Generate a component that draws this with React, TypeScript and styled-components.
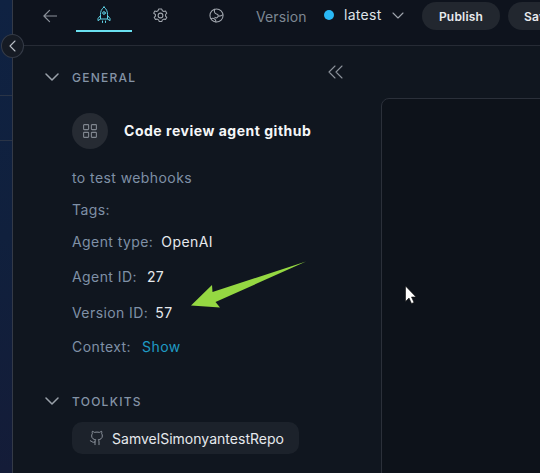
import React from "react";
import styled, { createGlobalStyle } from "styled-components";

const Global = createGlobalStyle`
  html, body { margin: 0; padding: 0; background: #0e131d; }
  * { box-sizing: border-box; }
`;

const Page = styled.div`
  position: relative;
  width: 540px;
  height: 473px;
  overflow: hidden;
  display: flex;
  font-family: Inter, "Liberation Sans", sans-serif;
  background: #10161f;
`;

const Rail = styled.div`
  width: 13px;
  flex: none;
  display: flex;
  flex-direction: column;
  border-right: 1px solid #343a47;
  background: linear-gradient(180deg, #0f2242 0%, #10203d 50%, #141c38 100%);
`;

const RailRow = styled.div<{ $h: number }>`
  height: ${(p) => p.$h}px;
  flex: none;
  border-bottom: 1px solid #2a3446;
`;

const Main = styled.div`
  flex: 1;
  min-width: 0;
  display: flex;
  flex-direction: column;
`;

const Header = styled.header`
  height: 46px;
  flex: none;
  display: flex;
  padding: 0 0 0 30px;
  background: #0e131d;
  border-bottom: 1px solid #262b35;
`;

const HeaderIcon = styled.div`
  width: 14px;
  height: 32px;
  margin-right: 19px;
  flex: none;
  display: flex;
  align-items: center;
  color: #8c929b;
`;

const Tab = styled.div<{ $active?: boolean }>`
  width: 56px;
  height: 32px;
  flex: none;
  display: flex;
  align-items: center;
  justify-content: center;
  padding-top: 0;
  color: ${(p) => (p.$active ? "#5fd5e8" : "#a0a5ad")};
  border-bottom: 2px solid ${(p) => (p.$active ? "#6ae0f0" : "transparent")};
`;

const VersionLabel = styled.span`
  margin-left: 12px;
  height: 32px;
  line-height: 33px;
  font-size: 14px;
  letter-spacing: 0.1px;
  color: #7d8793;
  width: 68px;
  flex: none;
`;

const VersionDot = styled.span`
  width: 10px;
  height: 10px;
  margin-top: 10px;
  border-radius: 50%;
  background: #29b8f5;
  flex: none;
`;

const VersionValue = styled.span`
  margin-left: 10px;
  width: 48px;
  flex: none;
  height: 30px;
  line-height: 30px;
  font-size: 14px;
  letter-spacing: 0.3px;
  color: #dfe3e8;
`;

const VersionCaret = styled.div`
  width: 12px;
  height: 30px;
  flex: none;
  display: flex;
  align-items: center;
  color: #a0a5ad;
`;

const PillButton = styled.button<{ $clipped?: boolean }>`
  height: 28px;
  margin-top: 2px;
  margin-left: ${(p) => (p.$clipped ? "8px" : "18px")};
  width: 78px;
  flex: none;
  padding: ${(p) => (p.$clipped ? "0 0 0 16px" : "0")};
  text-align: ${(p) => (p.$clipped ? "left" : "center")};
  border: 0;
  border-radius: 14px;
  background: #22272f;
  color: #e8eaed;
  font-family: inherit;
  font-size: 12px;
  font-weight: 600;
  letter-spacing: 0.2px;
`;

const Body = styled.div`
  flex: 1;
  min-height: 0;
  display: flex;
  background: #10161f;
`;

const Side = styled.aside`
  width: 315px;
  flex: none;
  padding: 23px 0 0 32px;
  display: flex;
  flex-direction: column;
`;

const SectionHead = styled.div`
  display: flex;
  align-items: center;
  gap: 13px;
  height: 16px;
  color: #9aa1aa;
`;

const SectionTitle = styled.span`
  font-size: 12px;
  font-weight: 500;
  letter-spacing: 1.25px;
  color: #8493a6;
`;

const Indented = styled.div`
  padding-left: 27px;
  display: flex;
  flex-direction: column;
`;

const Identity = styled.div`
  display: flex;
  align-items: center;
  gap: 16px;
  margin-top: 28px;
`;

const Avatar = styled.div`
  width: 36px;
  height: 36px;
  flex: none;
  border-radius: 50%;
  background: #262b33;
  color: #80868f;
  display: flex;
  align-items: center;
  justify-content: center;
`;

const AgentName = styled.h1`
  margin: 0;
  font-size: 14px;
  line-height: 20px;
  font-weight: 700;
  letter-spacing: 0.52px;
  color: #f5f6f8;
  white-space: nowrap;
`;

const Row = styled.div<{ $top: number }>`
  margin-top: ${(p) => p.$top}px;
  height: 20px;
  line-height: 20px;
  font-size: 14px;
  letter-spacing: 0.42px;
  color: #7f90a6;
  white-space: nowrap;
`;

const Value = styled.span<{ $gap: number }>`
  margin-left: ${(p) => p.$gap}px;
  color: #e6e9ed;
`;

const LinkValue = styled.span`
  margin-left: 11px;
  color: #1f9bc4;
`;

const ToolkitHead = styled(SectionHead)`
  margin-top: 36px;
`;

const Chip = styled.div`
  margin-top: 13px;
  width: 227px;
  height: 32px;
  border-radius: 10px;
  background: #1c222b;
  display: flex;
  align-items: center;
  gap: 7px;
  padding-left: 17px;
  font-size: 14px;
  letter-spacing: 0.02px;
  color: #e6e9ed;
  white-space: nowrap;
`;

const ChipIcon = styled.span`
  display: flex;
  color: #9aa1aa;
`;

const CollapseColumn = styled.div`
  width: 53px;
  flex: none;
  padding-top: 17px;
  color: #8c929b;
`;

const Canvas = styled.div`
  flex: 1;
  margin-top: 52px;
  margin-bottom: -20px;
  margin-right: -20px;
  border: 1px solid #2b303a;
  border-radius: 8px;
  background: #0d121a;
`;

const Toggle = styled.div`
  position: absolute;
  left: 1px;
  top: 34px;
  width: 23px;
  height: 24px;
  border-radius: 50%;
  border: 1px solid #353b47;
  background: #161b24;
  display: flex;
  align-items: center;
  justify-content: center;
  color: #b9bec6;
`;

const Overlay = styled.svg`
  position: absolute;
  left: 0;
  top: 0;
  pointer-events: none;
`;

const Stroke: React.FC<{ w: number; h: number; vb: string; sw?: number; children: React.ReactNode }> = ({ w, h, vb, sw = 1.5, children }) => (
  <svg width={w} height={h} viewBox={vb} fill="none" stroke="currentColor" strokeWidth={sw} strokeLinecap="round" strokeLinejoin="round">
    {children}
  </svg>
);

const Chevron = () => (
  <Stroke w={14} h={8} vb="0 0 14 8" sw={1.5}>
    <path d="M1 1l6 6 6-6" />
  </Stroke>
);

export default function App() {
  return (
    <Page>
      <Global />
      <Rail>
        <RailRow $h={96} />
        <RailRow $h={45} />
      </Rail>
      <Main>
        <Header>
          <HeaderIcon>
            <Stroke w={15} h={14} vb="0 0 15 14" sw={1.3}>
              <path d="M14.5 7H1M7 1L1 7l6 6" />
            </Stroke>
          </HeaderIcon>
          <Tab $active>
            <Stroke w={14} h={18} vb="0 0 14 18" sw={1}>
              <path d="M7 1C9.6 3 10.500 5.500 10.500 8.500v4.500h-7V8.500C3.500 5.500 4.400 3 7 1z" />
              <circle cx="7" cy="7" r="1.3" />
              <path d="M3.500 9.500L1 12.500v2.200l2.500-1.700M10.500 9.500l2.500 3v2.200l-2.500-1.700M5.500 15v1.500M8.500 15v1.500" />
            </Stroke>
          </Tab>
          <Tab>
            <Stroke w={15} h={15} vb="0 0 24 24" sw={1.7}>
              <path d="M12 1.5l2 .2 1 2.7 2.2 1.2 2.8-.7 2 3.4-1.9 2.1v2.6l1.9 2.1-2 3.4-2.8-.7-2.2 1.2-1 2.7h-4l-1-2.7-2.2-1.2-2.8.7-2-3.4 1.900-2.100v-2.600L1 8.300l2-3.400 2.800.7L8 4.400l1-2.700z" />
              <circle cx="12" cy="12" r="3.8" />
            </Stroke>
          </Tab>
          <Tab>
            <Stroke w={15} h={15} vb="0 0 24 24" sw={1.7}>
              <circle cx="12" cy="12" r="10.5" />
              <path d="M9 2C8 6 9 9 12 9.500c2.500.4 3.500 2.500 2 5-1 1.600-3 1.600-4.500.5M3 17c2.500-1 5-.5 7 1.500.8.800 1 2.500 1 4M16 13c2 0 4-.5 6-2" />
            </Stroke>
          </Tab>
          <VersionLabel>Version</VersionLabel>
          <VersionDot />
          <VersionValue>latest</VersionValue>
          <VersionCaret>
            <Stroke w={12} h={7} vb="0 0 12 7" sw={1.1}>
              <path d="M1 1l5 5 5-5" />
            </Stroke>
          </VersionCaret>
          <PillButton>Publish</PillButton>
          <PillButton $clipped>Save</PillButton>
        </Header>
        <Body>
          <Side>
            <SectionHead>
              <Chevron />
              <SectionTitle>GENERAL</SectionTitle>
            </SectionHead>
            <Indented>
              <Identity>
                <Avatar>
                  <Stroke w={14} h={14} vb="0 0 14 14" sw={1.1}>
                    <rect x=".6" y=".6" width="5" height="5" rx=".6" />
                    <rect x="8.400" y=".6" width="5" height="5" rx=".6" />
                    <rect x=".6" y="8.400" width="5" height="5" rx=".6" />
                    <rect x="8.400" y="8.400" width="5" height="5" rx=".6" />
                  </Stroke>
                </Avatar>
                <AgentName>Code review agent github</AgentName>
              </Identity>
              <Row $top={19}>to test webhooks</Row>
              <Row $top={12}>Tags:</Row>
              <Row $top={12}>
                Agent type:<Value $gap={8}>OpenAI</Value>
              </Row>
              <Row $top={15}>
                Agent ID:<Value $gap={10}>27</Value>
              </Row>
              <Row $top={16}>
                Version ID:<Value $gap={7}>57</Value>
              </Row>
              <Row $top={14}>
                Context:<LinkValue>Show</LinkValue>
              </Row>
            </Indented>
            <ToolkitHead>
              <Chevron />
              <SectionTitle>TOOLKITS</SectionTitle>
            </ToolkitHead>
            <Indented>
              <Chip>
                <ChipIcon>
                  <Stroke w={16} h={16} vb="0 0 24 24" sw={1.3}>
                    <path d="M15 22v-4a4.800 4.800 0 0 0-1-3.500c3 0 6-2 6-5.500.08-1.250-.27-2.480-1-3.500.28-1.150.28-2.350 0-3.500 0 0-1 0-3 1.500-2.640-.5-5.360-.5-8 0C6 2 5 2 5 2c-.3 1.150-.3 2.350 0 3.500A5.400 5.400 0 0 0 4 9c0 3.500 3 5.500 6 5.500-.39.490-.68 1.050-.85 1.650-.17.600-.22 1.230-.15 1.850v4" />
                    <path d="M9 18c-4.510 2-5-2-7-2" />
                  </Stroke>
                </ChipIcon>
                SamvelSimonyantestRepo
              </Chip>
            </Indented>
          </Side>
          <CollapseColumn>
            <Stroke w={15} h={14} vb="0 0 15 14" sw={1.1}>
              <path d="M7 1L1 7l6 6M14 1L8 7l6 6" />
            </Stroke>
          </CollapseColumn>
          <Canvas />
        </Body>
      </Main>
      <Toggle>
        <Stroke w={7} h={12} vb="0 0 7 12" sw={1.1}>
          <path d="M6 1L1 6l5 5" />
        </Stroke>
      </Toggle>
      <Overlay width={540} height={473} viewBox="0 0 540 473">
        <path d="M191 305.500L212 285l.5 7L306 261.500l-90.500 40.500 4.500 5.500z" fill="#95d842" />
        <path d="M405.500 286v15.500l3.500-3.500 2.500 5.500 2.500-1-2.500-5.500h4.500z" fill="#fff" stroke="#111" strokeWidth={0.6} />
      </Overlay>
    </Page>
  );
}
